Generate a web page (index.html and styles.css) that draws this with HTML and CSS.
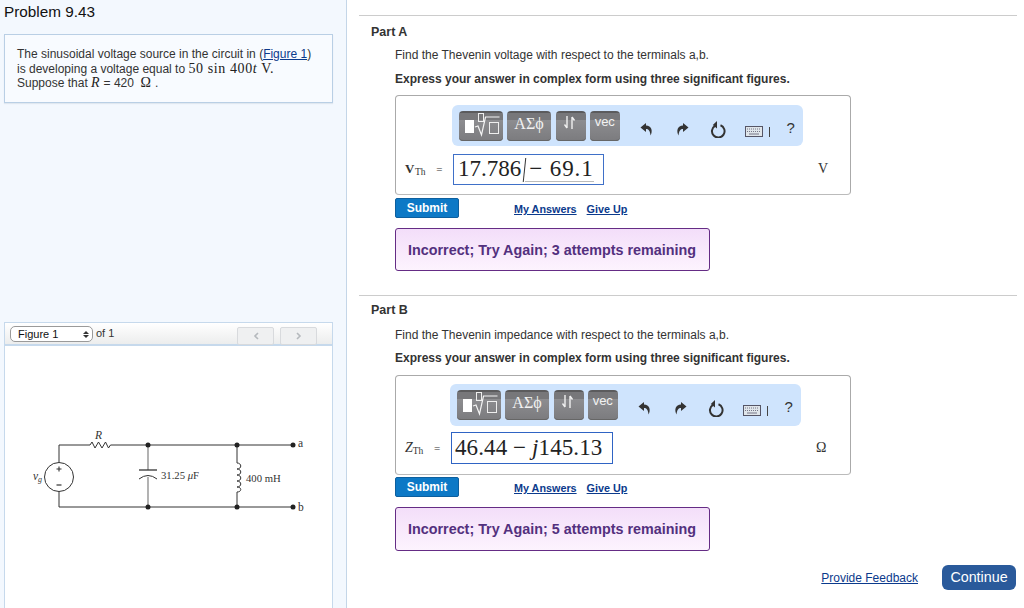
FILE: index.html
```html
<!DOCTYPE html>
<html lang="en">
<head>
<meta charset="utf-8">
<title>Problem 9.43</title>
<link rel="stylesheet" href="styles.css">
</head>
<body>
<div class="page">
  <aside class="left">
    <h1 class="problem-title">Problem 9.43</h1>
    <div class="intro">
      The sinusoidal voltage source in the circuit in (<a href="#">Figure 1</a>)<br>
      is developing a voltage equal to <span class="math">50 sin 400<i>t</i> V.</span><br>
      Suppose that <span class="math"><i>R</i></span> = 420 &nbsp;<span class="math">Ω</span> .
    </div>
    <div class="figure">
      <div class="figure-head">
        <div class="figure-select"><span>Figure 1</span><span class="updown"><b class="up"></b><b class="down"></b></span></div>
        <span class="of">of 1</span>
        <div class="pager">
          <span class="page-btn"><svg width="6" height="8" viewBox="0 0 6 8"><path d="M5 1 2 4l3 3" fill="none" stroke="#b5b9bd" stroke-width="1.6"/></svg></span>
          <span class="page-btn"><svg width="6" height="8" viewBox="0 0 6 8"><path d="M1 1l3 3-3 3" fill="none" stroke="#b5b9bd" stroke-width="1.6"/></svg></span>
        </div>
      </div>
      <svg class="circuit" width="327" height="262" viewBox="5 346 327 262">
        <g fill="none" stroke="#333" stroke-width="1">
          <path d="M59 462.5V445H90l2 -3 3 6 3.500 -6 3.500 6 3.500 -6 3 6 2 -3H293"/>
          <path d="M59 491.500V507H293"/>
          <circle cx="59" cy="477" r="14.500"/>
        </g>
        <g fill="none" stroke="#8a8a8a" stroke-width="1.300">
          <path d="M148 445V470M148 477V507"/>
        </g>
        <g fill="none" stroke="#333" stroke-width="1">
          <path d="M139 470H157" stroke-width="1.300"/>
          <path d="M139 479Q148 472 157 479"/>
          <path d="M237 445V463c5 0 5 6 0 6 5 0 5 6 0 6 5 0 5 6 0 6 5 0 5 6 0 6 5 0 5 5 0 5V507"/>
          <path d="M56.500 469h5M59 466.500v5" stroke-width="1.100"/>
          <path d="M56.500 485h5" stroke-width="1.200"/>
        </g>
        <g fill="#222">
          <circle cx="148" cy="445" r="2.500"/><circle cx="237" cy="445" r="2.500"/><circle cx="293" cy="445" r="2.500"/>
          <circle cx="148" cy="507" r="2.500"/><circle cx="237" cy="507" r="2.500"/><circle cx="293" cy="507" r="2.500"/>
        </g>
        <g class="circuit-text">
          <text class="big" x="95" y="439" font-style="italic">R</text>
          <text class="big" x="33" y="480" font-style="italic">v<tspan dy="2" font-size="8">g</tspan></text>
          <text class="mid" x="161" y="479">31.25 <tspan font-style="italic">μ</tspan>F</text>
          <text class="mid" x="246" y="482">400 mH</text>
          <text class="big" x="298" y="447">a</text>
          <text class="big" x="298" y="511">b</text>
        </g>
      </svg>
    </div>
  </aside>
  <main class="right">
    <section class="part part-a">
      <h2 class="part-title">Part A</h2>
      <div class="part-body">
        <p class="prompt">Find the Thevenin voltage with respect to the terminals a,b.</p>
        <p class="instruction">Express your answer in complex form using three significant figures.</p>
        <div class="answer">
          <div class="toolbar">
            <span class="tool tool-tpl"><b class="white-box"></b><svg width="27" height="26" viewBox="0 0 27 26"><path d="M1 15l3 -1 3.500 9 4 -18h14" fill="none" stroke="#f4f4f4" stroke-width="1.200"/><rect x="4.500" y="1.500" width="5" height="8" fill="none" stroke="#eee"/><rect x="15.500" y="10.500" width="9" height="11" fill="none" stroke="#eee"/></svg></span>
            <span class="tool tool-greek">ΑΣϕ</span>
            <span class="tool tool-arrows"><svg width="13" height="15" viewBox="0 0 13 15"><path d="M4 1V13M4 13 1.500 9.500M9 14V2M9 2l2.500 3.500" fill="none" stroke="#f0f0f0" stroke-width="1.400"/></svg></span>
            <span class="tool tool-vec">vec</span>
            <span class="tool-icons">
              <svg class="ic-undo" width="13" height="14" viewBox="0 0 13 14"><path d="M6 1 0.500 5.500 6 10V7c2.500 0 4 1.500 4.500 6.500 2.500 -5 1 -9.500 -4.500 -10z" fill="#333"/></svg>
              <svg class="ic-redo" width="13" height="14" viewBox="0 0 13 14"><path d="M7 1l5.500 4.500L7 10V7c-2.500 0-4 1.500-4.500 6.500-2.500-5-1-9.500 4.500-10z" fill="#333"/></svg>
              <svg class="ic-reset" width="16" height="17" viewBox="0 0 16 17"><path d="M5 4.800A6.300 6.300 0 1 0 10.500 4.300" fill="none" stroke="#333" stroke-width="2"/><path d="M7 0v7.500L2.800 4z" fill="#333"/></svg>
              <svg class="ic-keys" width="18" height="11" viewBox="0 0 18 11"><rect x=".5" y=".5" width="17" height="10" fill="#dfe5ea" stroke="#556"/><path d="M2 3h14M2 5.500h14" stroke="#778" stroke-dasharray="1 1"/><path d="M4 8h10" stroke="#778"/></svg>
              <i class="sep"></i>
              <span class="help">?</span>
            </span>
          </div>
          <div class="entry">
            <span class="label"><b class="var">V</b><span class="sub">Th</span> =</span>
            <span class="input"><span class="val">17.786</span><i class="angle-bar"></i><span class="angle">− 69.1</span></span>
            <span class="unit">V</span>
          </div>
        </div>
        <div class="actions">
          <a class="submit" href="#">Submit</a>
          <a class="act-link first" href="#">My Answers</a>
          <a class="act-link" href="#">Give Up</a>
        </div>
        <div class="feedback">Incorrect; Try Again; 3 attempts remaining</div>
      </div>
    </section>
    <section class="part part-b">
      <h2 class="part-title">Part B</h2>
      <div class="part-body">
        <p class="prompt">Find the Thevenin impedance with respect to the terminals a,b.</p>
        <p class="instruction">Express your answer in complex form using three significant figures.</p>
        <div class="answer">
          <div class="toolbar">
            <span class="tool tool-tpl"><b class="white-box"></b><svg width="27" height="26" viewBox="0 0 27 26"><path d="M1 15l3 -1 3.500 9 4 -18h14" fill="none" stroke="#f4f4f4" stroke-width="1.200"/><rect x="4.500" y="1.500" width="5" height="8" fill="none" stroke="#eee"/><rect x="15.500" y="10.500" width="9" height="11" fill="none" stroke="#eee"/></svg></span>
            <span class="tool tool-greek">ΑΣϕ</span>
            <span class="tool tool-arrows"><svg width="13" height="15" viewBox="0 0 13 15"><path d="M4 1V13M4 13 1.500 9.500M9 14V2M9 2l2.500 3.500" fill="none" stroke="#f0f0f0" stroke-width="1.400"/></svg></span>
            <span class="tool tool-vec">vec</span>
            <span class="tool-icons">
              <svg class="ic-undo" width="13" height="14" viewBox="0 0 13 14"><path d="M6 1 0.500 5.500 6 10V7c2.500 0 4 1.500 4.500 6.500 2.500 -5 1 -9.500 -4.500 -10z" fill="#333"/></svg>
              <svg class="ic-redo" width="13" height="14" viewBox="0 0 13 14"><path d="M7 1l5.500 4.500L7 10V7c-2.500 0-4 1.500-4.500 6.500-2.500-5-1-9.500 4.500-10z" fill="#333"/></svg>
              <svg class="ic-reset" width="16" height="17" viewBox="0 0 16 17"><path d="M5 4.800A6.300 6.300 0 1 0 10.500 4.300" fill="none" stroke="#333" stroke-width="2"/><path d="M7 0v7.500L2.800 4z" fill="#333"/></svg>
              <svg class="ic-keys" width="18" height="11" viewBox="0 0 18 11"><rect x=".5" y=".5" width="17" height="10" fill="#dfe5ea" stroke="#556"/><path d="M2 3h14M2 5.500h14" stroke="#778" stroke-dasharray="1 1"/><path d="M4 8h10" stroke="#778"/></svg>
              <i class="sep"></i>
              <span class="help">?</span>
            </span>
          </div>
          <div class="entry">
            <span class="label"><i class="var-i">Z</i><span class="sub">Th</span> =</span>
            <span class="input"><span class="val">46.44 − <i>j</i>145.13</span></span>
            <span class="unit">Ω</span>
          </div>
        </div>
        <div class="actions">
          <a class="submit" href="#">Submit</a>
          <a class="act-link first" href="#">My Answers</a>
          <a class="act-link" href="#">Give Up</a>
        </div>
        <div class="feedback">Incorrect; Try Again; 5 attempts remaining</div>
      </div>
    </section>
    <footer class="footer">
      <a class="provide" href="#">Provide Feedback</a>
      <a class="continue" href="#">Continue</a>
    </footer>
  </main>
</div>
</body>
</html>
```
FILE: styles.css
```css
* { box-sizing: border-box; }
html, body { margin: 0; padding: 0; }
body { background: #fff; font-family: "Liberation Sans", Arial, sans-serif; color: #222; overflow: hidden; }
.page { display: flex; width: 1024px; height: 608px; overflow: hidden; }
a { color: #0b3a8c; }

.left { width: 347px; height: 608px; flex: none; background: #f3f8fe; border-right: 1px solid #c4d6e8; padding: 4px 13px 0 4px; }
.problem-title { margin: 0; font-size: 15.300px; font-weight: 400; line-height: 16px; color: #111; }
.intro { margin-top: 14px; height: 69px; background: #f8fbff; border: 1px solid #b9cfe5; padding: 12px 12px 0 12px; font-size: 12px; line-height: 14.500px; color: #333; box-shadow: 0 1px 1px #e0e8f0; }
.math { font-family: "Liberation Serif", serif; font-size: 14px; letter-spacing: .6px; color: #222; }

.figure { margin-top: 219px; background: #fff; border: 1px solid #c6d9ec; border-bottom: 0; height: 286px; }
.figure-head { display: flex; align-items: flex-start; height: 23px; padding: 3px 15px 0 5px; background: linear-gradient(#fff, #eceded); border-bottom: 2px solid #c6d9ec; font-size: 11.500px; color: #333; }
.figure-select { display: flex; align-items: center; justify-content: space-between; width: 83px; height: 16px; border: 1px solid #9a9a9a; border-radius: 5px; background: #fff; padding: 0 3px 0 7px; font-size: 11px; color: #111; }
.updown { display: flex; flex-direction: column; gap: 1px; }
.up, .down { display: block; width: 0; height: 0; border-left: 3px solid transparent; border-right: 3px solid transparent; }
.up { border-bottom: 3px solid #333; }
.down { border-top: 3px solid #333; }
.of { margin-left: 3px; font-size: 11px; line-height: 14px; }
.pager { display: flex; gap: 6px; margin: 1px 0 0 auto; }
.page-btn { display: flex; align-items: center; justify-content: center; width: 37px; height: 18px; border: 1px solid #d8dadd; border-radius: 2px; background: #eff0f1; }
.circuit { display: block; }
.circuit-text text { font-family: "Liberation Serif", serif; fill: #333; }
.circuit-text .big { font-size: 11.500px; }
.circuit-text .mid { font-size: 10.700px; }

.right { flex: 1; padding: 15px 7px 0 12px; min-width: 0; }
.part { border-top: 1px solid #ccc; }
.part-b { margin-top: 24px; }
.part-title { margin: 9px 0 0 12px; font-size: 12.500px; line-height: 15px; font-weight: 700; color: #333; }
.part-b .part-title { margin-top: 7px; }
.part-body { padding-left: 36px; }
.prompt { margin: 8px 0 0; font-size: 12px; line-height: 14px; color: #333; }
.part-b .prompt { margin-top: 10px; }
.instruction { margin: 10px 0 0; font-size: 12px; line-height: 14px; font-weight: 700; color: #333; }
.part-b .instruction { margin-top: 9px; }
.answer { margin-top: 9px; width: 456px; height: 100px; border: 1px solid #aaa; border-bottom-color: #bbb; border-radius: 4px; background: #fff; padding: 9px 0 0 56px; }
.part-b .answer { margin-top: 10px; padding-left: 54px; padding-top: 8px; }
.toolbar { display: flex; align-items: flex-start; width: 351px; height: 41px; background: #cfe4fd; border-radius: 6px; padding: 6px 0 0 7px; gap: 4.500px; }
.part-b .toolbar { height: 42px; }
.tool { display: flex; justify-content: center; flex: none; height: 30px; border-radius: 4px; color: #f2f2f2; background: linear-gradient(#5b5b5d 0 2px, #77777a 2px 9px, #8d8d90 9px, #7b7b7e); box-shadow: inset 0 -1px #666; }
.tool-tpl { width: 43.500px; justify-content: flex-start; }
.tool-tpl .white-box { width: 9px; height: 13px; background: #fff; margin: 9px 0 0 6px; }
.tool-tpl svg { margin-top: 1px; }
.tool-greek { width: 44px; font-family: "Liberation Serif", serif; font-size: 16px; line-height: 25px; }
.tool-arrows { width: 30px; padding: 4px 3px 0 0; }
.tool-vec { width: 29.500px; font-size: 13px; line-height: 21px; }
.tool-icons { display: flex; align-items: center; height: 30px; margin: 3px 0 0 15.500px; }
.ic-redo { margin-left: 23px; }
.ic-reset { margin-left: 21px; }
.ic-keys { margin: 5px 0 0 19px; }
.sep { width: 1px; height: 10px; background: #444; margin: 5px 0 0 6px; }
.help { font-size: 15px; margin: 0 0 4px 17px; color: #333; }
.entry { display: flex; align-items: center; height: 32px; margin: 7px 0 0 -47px; }
.part-b .entry { margin-left: -45px; margin-top: 6px; }
.label { flex: none; width: 48px; font-family: "Liberation Serif", serif; font-size: 11px; color: #333; white-space: nowrap; }
.part-b .label { width: 46px; }
.var { font-size: 13px; letter-spacing: .5px; }
.var-i { font-size: 14px; }
.sub { font-size: 9.500px; position: relative; top: 2px; margin-right: 8px; }
.input { display: flex; flex: none; align-items: center; height: 31px; border: 1px solid #3f70c8; padding: 0 4px; font-family: "Liberation Serif", serif; font-size: 23px; color: #222; width: 151px; white-space: nowrap; }
.part-b .input { width: 162px; height: 32px; padding: 0 3px; border-color: #2f64c4; }
.part-b .val { letter-spacing: .1px; }
.angle-bar { flex: none; width: 1px; height: 24px; margin: 1px 0 0 3px; background: #333; transform: rotate(6deg); }
.angle { padding-left: 4px; border-bottom: 1px solid #bbb; line-height: 24px; letter-spacing: .9px; }
.unit { flex: none; width: 12px; font-family: "Liberation Serif", serif; font-size: 14px; color: #333; }
.part-a .unit { margin-left: 214px; }
.part-b .unit { margin-left: 203px; }
.actions { display: flex; align-items: center; margin-top: 3px; height: 20px; font-size: 10.800px; font-weight: 700; }
.part-b .actions { margin-top: 2px; }
.submit { display: block; width: 64px; height: 20px; background: #0d79c6; border: 1px solid #0d5f9e; border-radius: 2px; color: #fff; font-size: 12px; line-height: 18px; text-align: center; text-decoration: none; }
.act-link { margin-left: 10px; color: #0b3a8c; position: relative; top: 1px; }
.act-link.first { margin-left: 55px; }
.feedback { display: flex; align-items: center; margin-top: 10px; width: 315px; height: 43px; padding-left: 12px; background: linear-gradient(#f3def9, #fdf3fe); border: 1px solid #652c85; border-radius: 3px; color: #53307e; font-size: 14.350px; font-weight: 700; }
.part-b .feedback { height: 44px; }
.footer { display: flex; justify-content: flex-end; align-items: center; margin-top: 14px; height: 25px; }
.provide { font-size: 12px; margin-right: 24px; }
.continue { display: block; width: 74px; height: 25px; margin-right: 1px; background: #2a5a9b; border-radius: 6px; color: #fff; font-size: 14.300px; line-height: 24px; text-align: center; text-decoration: none; }
```
